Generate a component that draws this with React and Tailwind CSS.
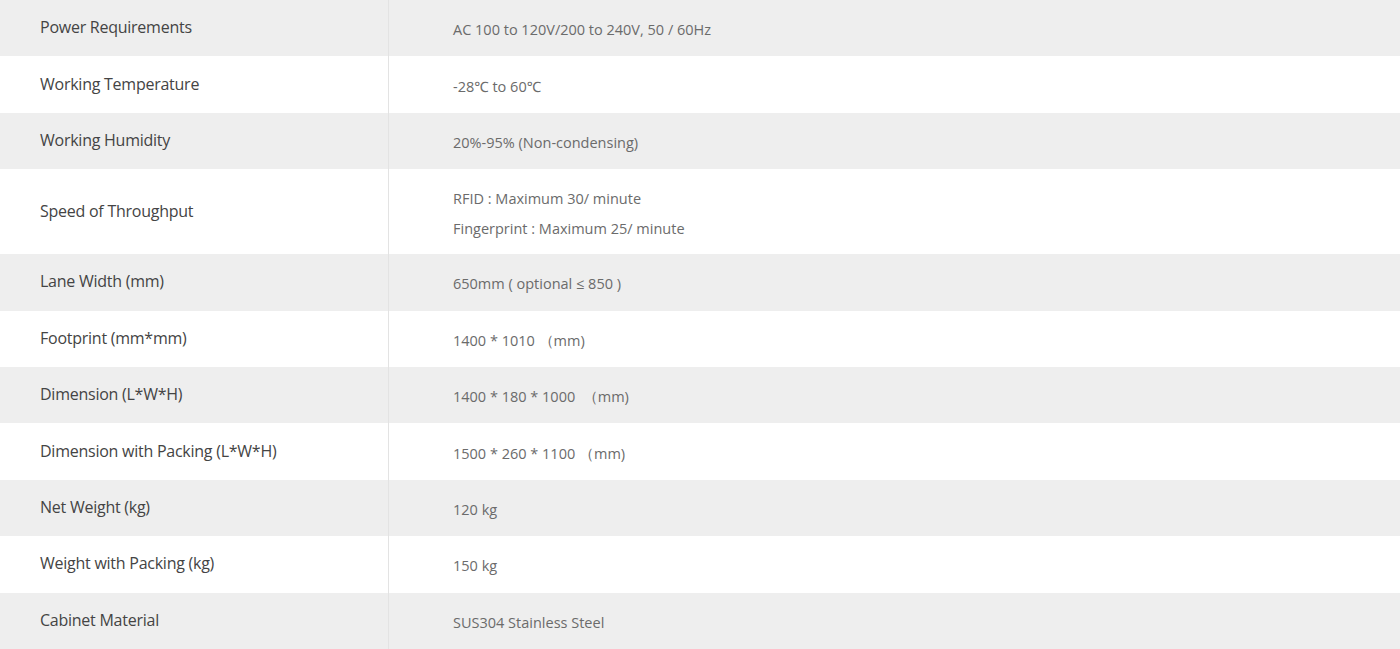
import React from "react";

const rows = [
  ["Power Requirements", ["AC 100 to 120V/200 to 240V, 50 / 60Hz"]],
  ["Working Temperature", ["-28℃ to 60℃"]],
  ["Working Humidity", ["20%-95% (Non-condensing)"]],
  ["Speed of Throughput", ["RFID : Maximum 30/ minute", "Fingerprint : Maximum 25/ minute"]],
  ["Lane Width (mm)", ["650mm ( optional ≤ 850 )"]],
  ["Footprint (mm*mm)", ["1400 * 1010 （mm)"]],
  ["Dimension (L*W*H)", ["1400 * 180 * 1000  （mm)"]],
  ["Dimension with Packing (L*W*H)", ["1500 * 260 * 1100 （mm)"]],
  ["Net Weight (kg)", ["120 kg"]],
  ["Weight with Packing (kg)", ["150 kg"]],
  ["Cabinet Material", ["SUS304 Stainless Steel"]],
];

export default function App() {
  return (
    <div className="w-[1400px] h-[649px] overflow-hidden bg-white" style={{ fontFamily: '"Open Sans", "Noto Sans", sans-serif' }}>
      {rows.map(([label, vals], i) => (
        <div
          key={i}
          className={`flex ${vals.length > 1 ? "h-[85px]" : "h-[56.4px]"} ${i % 2 === 0 ? "bg-[#eeeeee]" : "bg-white"}`}
        >
          <div className="w-[389px] shrink-0 border-r border-[#e3e3e3] flex items-center pl-[40px] pb-[2px] text-[16px] tracking-[-0.25px] text-[#444444]">
            {label}
          </div>
          <div className="flex-1 flex flex-col justify-center pl-[64px] pt-[4px] text-[14.5px] tracking-[0px] text-[#6b6b6b] leading-[30px]">
            {vals.map((v, j) => (
              <div key={j} className="whitespace-pre">{v}</div>
            ))}
          </div>
        </div>
      ))}
    </div>
  );
}
